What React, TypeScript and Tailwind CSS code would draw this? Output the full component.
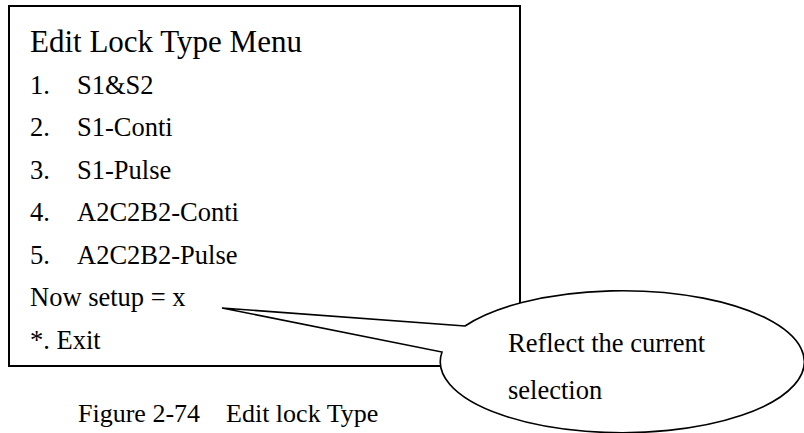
import React from "react";

const items = [
  ["1.", "S1&S2"],
  ["2.", "S1-Conti"],
  ["3.", "S1-Pulse"],
  ["4.", "A2C2B2-Conti"],
  ["5.", "A2C2B2-Pulse"],
];

export default function App() {
  return (
    <div
      className="relative w-[804px] h-[433px] overflow-hidden bg-white text-black"
      style={{ fontFamily: '"Liberation Serif", "Times New Roman", serif' }}
    >
      <div className="ml-[8px] mt-[5px] w-[513px] h-[362px] border-2 border-black pl-[20px] pt-[17.5px]">
        <div className="text-[31px] leading-[34px] mb-[5.3px]">Edit Lock Type Menu</div>
        {items.map(([n, t]) => (
          <div key={n} className="flex text-[26.5px] leading-[42.5px]">
            <span className="w-[47px]">{n}</span>
            <span>{t}</span>
          </div>
        ))}
        <div className="text-[26.5px] leading-[42.5px]">Now setup = x</div>
        <div className="text-[26.5px] leading-[42.5px]">*. Exit</div>
      </div>
      <div className="ml-[78px] mt-[32px] text-[26px] leading-[30px] whitespace-pre">
        {"Figure 2-74    Edit lock Type"}
      </div>

      <div className="absolute inset-0 pointer-events-none">
        <svg width="804" height="433" className="absolute left-0 top-0">
          <path
            d="M 465 326 L 222 308 L 442 352 A 182 71 0 1 0 465 326 Z"
            fill="white"
            stroke="black"
            strokeWidth="1.6"
            strokeLinejoin="miter"
          />
        </svg>
        <div className="absolute left-[508px] top-[319.5px] text-[26.5px] leading-[47px]">
          <div>Reflect the current</div>
          <div>selection</div>
        </div>
      </div>
    </div>
  );
}
